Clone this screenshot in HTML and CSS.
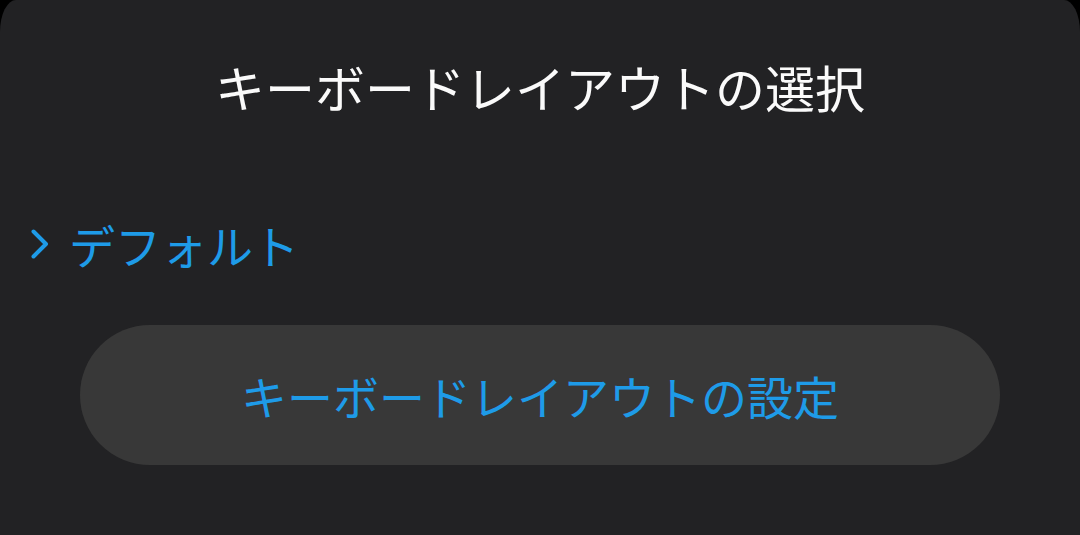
FILE: index.html
```html
<!DOCTYPE html>
<html>
<head>
    <title>キーボードレイアウトの選択</title>
    <link rel="stylesheet" href="styles.css">
</head>
<body>
    <div class="panel">
        <h1 class="title">キーボードレイアウトの選択</h1>

        <!-- Current layout -->
        <div class="layout-item">
            <svg class="chevron" width="18" height="30" viewBox="0 0 18 30">
                <path d="M2.5 2.5 L15 15 L2.5 27.5" fill="none" stroke="#1e9be8" stroke-width="4" stroke-linecap="round" stroke-linejoin="round"/>
            </svg>
            <span class="layout-name">デフォルト</span>
        </div>

        <button type="button" class="settings-button">キーボードレイアウトの設定</button>
    </div>
</body>
</html>
```

FILE: styles.css
```css
body {
    margin: 0;
    background-color: #000;
    font-family: "Noto Sans CJK JP", "Noto Sans", sans-serif;
}

.panel {
    height: 535px;
    box-sizing: border-box;
    padding-top: 56px;
    background-color: #222224;
    border-radius: 16px 16px 0 0 / 32px 32px 0 0;
    display: flex;
    flex-direction: column;
}

.title {
    margin: 0;
    font-size: 50px;
    font-weight: normal;
    line-height: 60px;
    color: #fafafa;
    text-align: center;
}

.layout-item {
    display: flex;
    align-items: center;
    gap: 20px;
    margin-top: 101px;
    padding-left: 31px;
    height: 54px;
}

.chevron {
    display: block;
}

.layout-name {
    font-size: 46px;
    line-height: 54px;
    color: #1e9be8;
}

.settings-button {
    margin: 54px 80px 0;
    height: 140px;
    border: none;
    border-radius: 70px;
    background-color: #383838;
    color: #1e9be8;
    font-family: inherit;
    font-size: 46px;
    line-height: 60px;
    padding: 0;
    cursor: pointer;
}
```
